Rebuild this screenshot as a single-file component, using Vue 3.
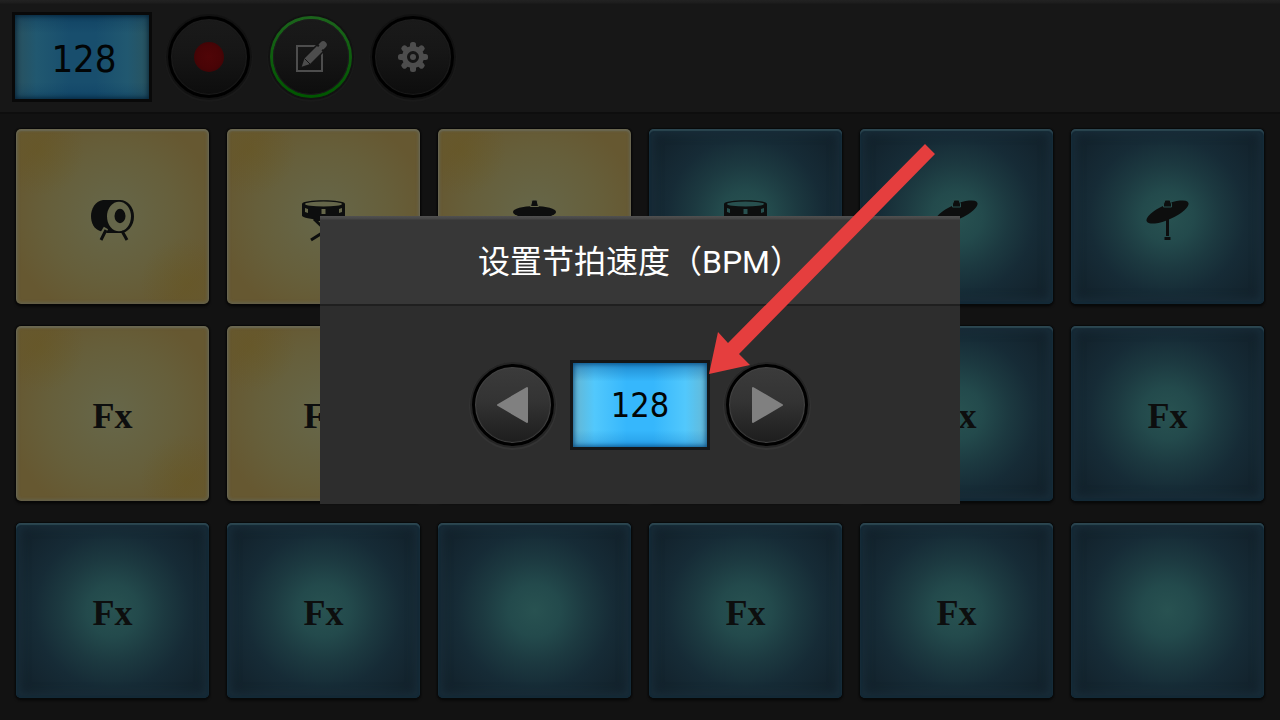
<script setup>
import { ref } from 'vue'

const bpm = ref('128')

const pads = [
  { tone: 'gold', icon: 'kick', label: 'Kick drum' },
  { tone: 'gold', icon: 'snare', label: 'Snare drum' },
  { tone: 'gold', icon: 'hihat', label: 'Hi-hat' },
  { tone: 'blue', icon: 'snare', label: 'Snare drum' },
  { tone: 'blue', icon: 'crash', label: 'Crash cymbal' },
  { tone: 'blue', icon: 'crash', label: 'Crash cymbal' },
  { tone: 'gold', text: 'Fx' },
  { tone: 'gold', text: 'Fx' },
  { tone: 'gold', label: 'Empty pad' },
  { tone: 'blue', label: 'Empty pad' },
  { tone: 'blue', text: 'Fx' },
  { tone: 'blue', text: 'Fx' },
  { tone: 'blue', text: 'Fx' },
  { tone: 'blue', text: 'Fx' },
  { tone: 'blue', label: 'Empty pad' },
  { tone: 'blue', text: 'Fx' },
  { tone: 'blue', text: 'Fx' },
  { tone: 'blue', label: 'Empty pad' },
]

function step(amount) {
  bpm.value = String((Number(bpm.value) || 0) + amount)
}
</script>

<template>
  <div class="app">
    <header class="toolbar">
      <button class="lcd lcd-dim" type="button" aria-label="BPM">{{ bpm }}</button>
      <div class="tools">
        <button class="round dim" type="button" aria-label="Record">
          <span class="record-dot"></span>
        </button>
        <button class="round dim active" type="button" aria-label="Edit">
          <svg class="tool-icon" viewBox="0 0 32 32">
            <path d="M2 5H27V30H2Z" fill="none" stroke="#4d4d4d" stroke-width="2" />
            <path d="M6 26L9.500 17.500 25 2 30.500 7.500 15 23Z" fill="#4d4d4d" stroke="#151515" stroke-width="3" />
            <path d="M6.700 25.700L9.500 17.500 22 5 27.500 10.500 15 23Z" fill="#4d4d4d" />
            <path d="M23.500 3.500l2.200-2.200a3 3 0 0 1 5 5L28.500 8.500z" fill="#4d4d4d" />
            <path d="M9.500 17.500l5.500 5.500" stroke="#151515" stroke-width="1" />
          </svg>
        </button>
        <button class="round dim" type="button" aria-label="Settings">
          <svg class="tool-icon" viewBox="0 0 32 32">
            <g fill="#4d4d4d">
              <rect v-for="n in 8" :key="n" x="13" y="1" width="6" height="9" rx="2.500" :transform="`rotate(${n * 45} 16 16)`" />
            </g>
            <circle cx="16" cy="16" r="8.500" fill="none" stroke="#4d4d4d" stroke-width="5" />
            <circle cx="16" cy="16" r="3" fill="#4d4d4d" />
          </svg>
        </button>
      </div>
    </header>

    <main class="pads">
      <button
        v-for="(pad, i) in pads"
        :key="i"
        type="button"
        class="pad"
        :class="pad.tone"
        :aria-label="pad.label"
      >
        <span v-if="pad.text" class="fx">{{ pad.text }}</span>
        <svg v-else-if="pad.icon === 'kick'" class="pad-icon" viewBox="0 0 44 44">
          <path d="M12 1H30V34H15L9 32C3 30 0 24 0 17S4 2 12 1Z" />
          <ellipse cx="29" cy="17.500" rx="14" ry="16.500" />
          <ellipse class="light" cx="28" cy="17.500" rx="12" ry="14.800" />
          <ellipse cx="29" cy="17" rx="5.500" ry="7.200" />
          <path class="gap" d="M15 29L9 39" />
          <path class="leg" d="M15 31l-5 10M31 32l5 9" />
        </svg>
        <svg v-else-if="pad.icon === 'snare'" class="pad-icon" viewBox="0 0 44 44">
          <path d="M0 5C0 0 43 0 43 5V17C36 22 7 22 0 17Z" />
          <path d="M10 18h24l-5 4H15z" />
          <ellipse class="light" cx="21.500" cy="5" rx="18.500" ry="2.500" />
          <path class="light" d="M3 9l3 1v4l-3-1zM19.500 10h4v5h-4zM40 9l-3 1v4l3-1z" />
          <path class="leg" d="M12 20L33 40M31 20L20 34 9 41" />
        </svg>
        <svg v-else-if="pad.icon === 'hihat'" class="pad-icon" viewBox="0 0 44 44">
          <ellipse cx="21.500" cy="13" rx="21.500" ry="6" />
          <path class="outlined" d="M19 1h5l1.500 6.500h-8z" />
          <ellipse cx="21.500" cy="20" rx="21.500" ry="4" />
          <path d="M20 20h3v21h-3z" />
        </svg>
        <svg v-else-if="pad.icon === 'crash'" class="pad-icon" viewBox="0 0 44 44">
          <ellipse cx="21.500" cy="13" rx="22.800" ry="7.500" transform="rotate(-24 21.500 13)" />
          <path class="outlined" d="M17.500 8V5l1.500-4h5l1.500 4v3z" />
          <path d="M20 20h3v17h-3zM18.500 38h6v3h-6z" />
        </svg>
      </button>
    </main>

    <div class="overlay">
      <section class="dialog" role="dialog" aria-labelledby="dialog-title">
        <h1 id="dialog-title" class="title">设置节拍速度（BPM）</h1>
        <div class="controls">
          <button class="round" type="button" aria-label="Slower" @click="step(-1)">
            <svg class="triangle" viewBox="0 0 40 40">
              <path d="M5 20L34 3V37Z" />
            </svg>
          </button>
          <div class="value">
            <input v-model="bpm" class="lcd" type="text" inputmode="numeric" aria-labelledby="dialog-title" />
            <svg class="pointer" viewBox="0 0 226 230" aria-hidden="true">
              <path d="M0 230L9 188L19 199L216 0L226 10L30 210L41 221Z" fill="#e53e3e" />
            </svg>
          </div>
          <button class="round" type="button" aria-label="Faster" @click="step(1)">
            <svg class="triangle" viewBox="0 0 40 40">
              <path d="M35 20L6 3V37Z" />
            </svg>
          </button>
        </div>
      </section>
    </div>
  </div>
</template>

<style>
body {
  background: #121212;
}
</style>

<style scoped>
.app {
  display: flex;
  flex-direction: column;
  min-height: 100vh;
  background: #121212;
  font-family: Roboto, "Noto Sans CJK SC", sans-serif;
}

button,
input {
  margin: 0;
  padding: 0;
  border: 0;
  box-sizing: border-box;
}

.toolbar {
  display: flex;
  align-items: center;
  gap: 16px;
  padding: 12px 12px 10px;
  border-bottom: 2px solid #0e0e0e;
  background: linear-gradient(#222, #1d1d1d 3px, #171717 4px);
}

.tools {
  display: flex;
  gap: 20px;
}

.lcd {
  display: block;
  width: 140px;
  height: 90px;
  border: 3px solid #141617;
  background:
    linear-gradient(rgba(0, 80, 150, 0.45), transparent 22%, transparent 80%, rgba(0, 100, 180, 0.3)),
    linear-gradient(90deg, #66b5d0, #52c8fc 16%, #36b7fc 40%, #36b7fc 60%, #52c8fc 84%, #66b8d4);
  box-shadow: inset 0 0 5px 1px rgba(0, 60, 110, 0.8);
  color: #020506;
  font-family: "DejaVu Sans Condensed", "DejaVu Sans", sans-serif;
  font-size: 34px;
  line-height: 84px;
  text-align: center;
}

.lcd-dim {
  padding: 4px 0 0 4px;
  border-color: #090909;
  background:
    linear-gradient(rgba(0, 40, 75, 0.3), transparent 22%, transparent 80%, rgba(0, 50, 90, 0.3)),
    linear-gradient(90deg, #29505d, #215870 16%, #184e6d 40%, #184e6d 60%, #215870 84%, #29535f);
  box-shadow: inset 0 0 5px 1px rgba(0, 25, 45, 0.8);
  font-size: 38px;
  line-height: 80px;
}

.round {
  display: flex;
  align-items: center;
  justify-content: center;
  width: 82px;
  height: 82px;
  border: 3px solid #000;
  border-radius: 50%;
  background: linear-gradient(#3b3b3b, #333 45%, #1d1d1d);
  background-clip: padding-box;
  box-shadow:
    0 0 0 2px #252525,
    0 1px 0 3px #343434,
    inset 0 0 1px 1px #444;
}

.dim {
  background: linear-gradient(#1a1a1a, #161616 45%, #0d0d0d);
  background-clip: padding-box;
  box-shadow:
    0 0 0 2px #121212,
    0 1px 0 3px #1a1a1a,
    inset 0 0 1px 1px #1d1d1d;
}

.active {
  border-color: transparent;
  background:
    linear-gradient(#1a1a1a, #161616 45%, #0d0d0d) padding-box,
    linear-gradient(#1c641c, #005500) border-box;
}

.record-dot {
  width: 30px;
  height: 30px;
  border-radius: 50%;
  background: radial-gradient(#500507, #490406 55%, #330506);
}

.tool-icon {
  width: 32px;
  height: 32px;
}

.pads {
  flex: 1;
  display: grid;
  grid-template-columns: repeat(6, 1fr);
  grid-template-rows: repeat(3, minmax(80px, 1fr));
  gap: 22px 18px;
  padding: 15px 16px 22px;
}

.pad {
  --glow: #65664a;
  display: flex;
  align-items: center;
  justify-content: center;
  border-radius: 5px;
  color: #0d0e0e;
}

.gold {
  background:
    radial-gradient(circle at 12% 12%, rgba(103, 87, 34, 0.5), transparent 20%),
    radial-gradient(circle at 88% 88%, rgba(103, 87, 34, 0.5), transparent 20%),
    radial-gradient(circle, #66674a, #665f3b 50%, #665831 80%);
  box-shadow:
    0 0 1px 1px #080808,
    0 2px 3px #050505,
    inset 0 1px 1px 1px #6a6750,
    inset 0 0 3px 2px #646049;
}

.blue {
  --glow: #28504f;
  background: radial-gradient(circle, #285251, #234a4c 20%, #1c3940 40%, #162b36 60%, #12212b 90%);
  box-shadow:
    0 0 1px 1px #080a0b,
    0 2px 3px #050505,
    inset 0 2px 1px #2c4650,
    inset 0 0 1px 2px #132936,
    inset 0 0 10px 5px #182c38;
}

.pad-icon {
  width: 44px;
  height: 44px;
  margin-top: 8px;
  fill: #0d0e0e;
}

.light {
  fill: var(--glow);
}

.gap {
  stroke: var(--glow);
  stroke-width: 5px;
}

.leg {
  fill: none;
  stroke: #0d0e0e;
  stroke-width: 3px;
}

.outlined {
  stroke: var(--glow);
  stroke-width: 1px;
}

.fx {
  margin-top: 4px;
  font-family: "Liberation Serif", serif;
  font-size: 36px;
  font-weight: 700;
  line-height: 40px;
}

.overlay {
  position: fixed;
  inset: 0;
  display: flex;
  align-items: center;
  justify-content: center;
}

.dialog {
  width: 50%;
  min-width: 360px;
  background: #2d2d2d;
}

.title {
  margin: 0;
  padding: 22px 0 18px;
  border-bottom: 2px solid #1f1f1f;
  background: linear-gradient(#505050, #454545 3px, #373737 4px);
  color: #fff;
  font-size: 32px;
  font-weight: 400;
  line-height: 48px;
  text-align: center;
}

.controls {
  display: flex;
  align-items: center;
  justify-content: center;
  gap: 16px;
  padding: 54px 0;
}

.value {
  position: relative;
}

.triangle {
  width: 40px;
  height: 40px;
  fill: #808080;
  stroke: #808080;
  stroke-width: 2px;
  stroke-linejoin: round;
}

.pointer {
  position: absolute;
  left: 139px;
  bottom: 76px;
  width: 226px;
  height: 230px;
  pointer-events: none;
}
</style>
